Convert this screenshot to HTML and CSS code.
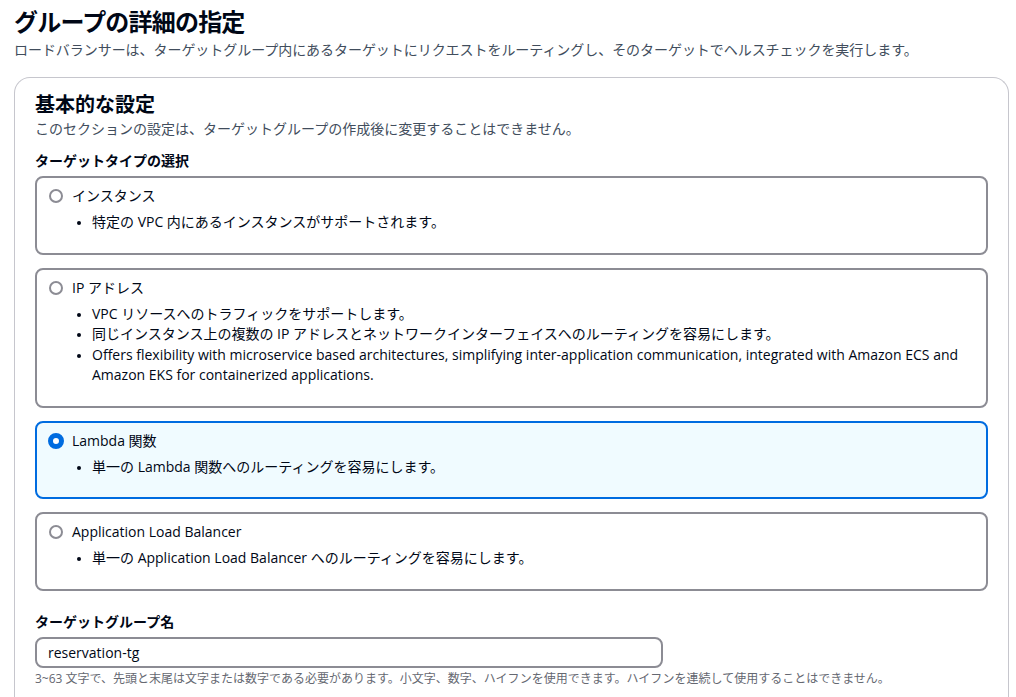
FILE: index.html
```html
<!DOCTYPE html>
<html lang="ja">
<head>
    <meta charset="UTF-8">
    <meta name="viewport" content="width=device-width, initial-scale=1.0">
    <title>グループの詳細の指定</title>
    <link rel="stylesheet" href="styles.css">
</head>
<body>
    <div class="page">
        <h1>グループの詳細の指定</h1>
        <p class="page-desc">ロードバランサーは、ターゲットグループ内にあるターゲットにリクエストをルーティングし、そのターゲットでヘルスチェックを実行します。</p>

        <div class="container">
            <h2>基本的な設定</h2>
            <p class="section-desc">このセクションの設定は、ターゲットグループの作成後に変更することはできません。</p>

            <div class="field-label">ターゲットタイプの選択</div>
            <div class="tiles">
                <label class="tile">
                    <div class="tile-head">
                        <input type="radio" name="targetType" value="instance">
                        <span class="radio"></span>
                        <span>インスタンス</span>
                    </div>
                    <ul>
                        <li>特定の VPC 内にあるインスタンスがサポートされます。</li>
                    </ul>
                </label>
                <label class="tile">
                    <div class="tile-head">
                        <input type="radio" name="targetType" value="ip">
                        <span class="radio"></span>
                        <span>IP アドレス</span>
                    </div>
                    <ul>
                        <li>VPC リソースへのトラフィックをサポートします。</li>
                        <li>同じインスタンス上の複数の IP アドレスとネットワークインターフェイスへのルーティングを容易にします。</li>
                        <li>Offers flexibility with microservice based architectures, simplifying inter-application communication, integrated with Amazon ECS and Amazon EKS for containerized applications.</li>
                    </ul>
                </label>
                <label class="tile selected">
                    <div class="tile-head">
                        <input type="radio" name="targetType" value="lambda" checked>
                        <span class="radio"></span>
                        <span>Lambda 関数</span>
                    </div>
                    <ul>
                        <li>単一の Lambda 関数へのルーティングを容易にします。</li>
                    </ul>
                </label>
                <label class="tile">
                    <div class="tile-head">
                        <input type="radio" name="targetType" value="alb">
                        <span class="radio"></span>
                        <span>Application Load Balancer</span>
                    </div>
                    <ul>
                        <li>単一の Application Load Balancer へのルーティングを容易にします。</li>
                    </ul>
                </label>
            </div>

            <div class="field">
                <label class="field-label" for="tgName">ターゲットグループ名</label>
                <input class="text-input" type="text" id="tgName" value="reservation-tg">
                <div class="help">3~63 文字で、先頭と末尾は文字または数字である必要があります。小文字、数字、ハイフンを使用できます。ハイフンを連続して使用することはできません。</div>
            </div>
        </div>
    </div>
</body>
</html>
```

FILE: styles.css
```css
body {
    font-family: "Open Sans", "Noto Sans CJK JP", sans-serif;
    font-size: 14px;
    line-height: 20px;
    color: #000716;
    margin: 0;
    padding: 0;
    background-color: #fff;
}

.page {
    padding: 7px 7px 0 14px;
}

h1 {
    font-size: 24px;
    line-height: 30px;
    font-weight: bold;
    letter-spacing: -0.8px;
    margin: 0;
}

.page-desc {
    margin: 3px 0 0;
    color: #414d5c;
    letter-spacing: -0.05px;
}

.container {
    margin-top: 17px;
    border: 1px solid #c6c6cd;
    border-bottom: none;
    border-radius: 16px 16px 0 0;
    padding: 15px 20px 20px;
}

h2 {
    font-size: 20px;
    line-height: 24px;
    font-weight: bold;
    margin: 0;
}

.section-desc {
    margin: 2px 0 0;
    color: #414d5c;
}

.field-label {
    display: block;
    font-weight: bold;
    margin-top: 12px;
}

.tiles {
    display: flex;
    flex-direction: column;
    gap: 13px;
    margin-top: 5px;
}

.tile {
    display: block;
    border: 2px solid #8c8c94;
    border-radius: 8px;
    padding: 8px 12px 20px;
    cursor: pointer;
}

.tile.selected {
    border-color: #006ce0;
    background-color: #f0fbff;
}

.tile-head {
    display: flex;
    align-items: center;
    gap: 9px;
}

.tile-head input {
    display: none;
}

.radio {
    width: 14px;
    height: 14px;
    border: 2px solid #8c8c94;
    border-radius: 50%;
    box-sizing: border-box;
    background: #fff;
    flex-shrink: 0;
}

.tile.selected .radio {
    width: 16px;
    height: 16px;
    margin: 0 -1px;
    border: 5px solid #006ce0;
}

.tile ul {
    margin: 6px 0 0;
    padding-left: 43px;
}

.tile li {
    line-height: 20.5px;
}

.tile li::marker {
    font-size: 12px;
}

.field {
    margin-top: 21px;
}

.field .field-label {
    margin-top: 0;
}

.text-input {
    display: block;
    box-sizing: border-box;
    width: 628px;
    height: 31px;
    margin-top: 5px;
    padding: 0 11px;
    border: 2px solid #8c8c94;
    border-radius: 8px;
    font-family: "Open Sans", "Noto Sans CJK JP", sans-serif;
    font-size: 14px;
    color: #000716;
}

.help {
    margin-top: 3px;
    font-size: 12px;
    line-height: 16px;
    color: #656871;
}
```
